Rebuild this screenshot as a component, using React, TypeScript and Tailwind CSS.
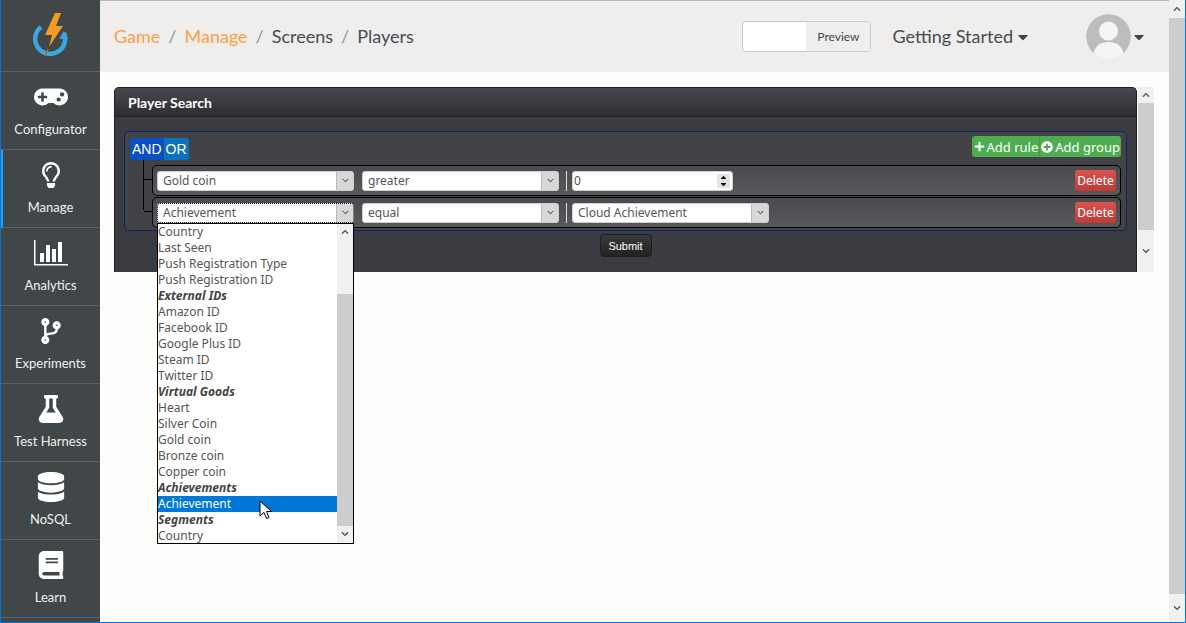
import React from 'react';
import { FaBook, FaChevronDown, FaChevronUp, FaCodeBranch, FaDatabase, FaFlask, FaGamepad, FaPlus, FaPlusCircle, FaRegLightbulb, FaCaretDown, FaSortDown, FaSortUp } from 'react-icons/fa';

const navItems = [
  { label: 'Configurator', icon: <FaGamepad className="w-[34px] h-[34px]" /> },
  { label: 'Manage', icon: <FaRegLightbulb className="w-[26px] h-[26px]" />, active: true },
  { label: 'Analytics', icon: <ChartIcon /> },
  { label: 'Experiments', icon: <FaCodeBranch className="w-[26px] h-[26px]" /> },
  { label: 'Test Harness', icon: <FaFlask className="w-[28px] h-[28px]" /> },
  { label: 'NoSQL', icon: <FaDatabase className="w-[28px] h-[30px]" /> },
  { label: 'Learn', icon: <FaBook className="w-[28px] h-[28px]" /> },
];

const dropdownOptions = [
  { label: 'Country' },
  { label: 'Last Seen' },
  { label: 'Push Registration Type' },
  { label: 'Push Registration ID' },
  { label: 'External IDs', group: true },
  { label: 'Amazon ID' },
  { label: 'Facebook ID' },
  { label: 'Google Plus ID' },
  { label: 'Steam ID' },
  { label: 'Twitter ID' },
  { label: 'Virtual Goods', group: true },
  { label: 'Heart' },
  { label: 'Silver Coin' },
  { label: 'Gold coin' },
  { label: 'Bronze coin' },
  { label: 'Copper coin' },
  { label: 'Achievements', group: true },
  { label: 'Achievement', selected: true },
  { label: 'Segments', group: true },
  { label: 'Country' },
];

function ChartIcon() {
  return (
    <svg width="34" height="26" viewBox="0 0 34 26" fill="currentColor">
      <path d="M0 0h1.5v24H34v1.5H0z" />
      <rect x="6" y="13" width="4" height="9" />
      <rect x="12" y="5" width="4" height="17" />
      <rect x="18" y="9" width="4" height="13" />
      <rect x="24" y="2" width="4" height="20" />
    </svg>
  );
}

function Logo() {
  return (
    <svg width="38" height="46" viewBox="0 0 38 46">
      <path d="M10 14 A15 15 0 1 0 33 20" fill="none" stroke="#3ba7df" strokeWidth="4.5" />
      <path d="M33 18 l4 8 h-9 z" fill="#3ba7df" />
      <path d="M14 22 L24 0 H30 L25 13 H32 L18 34 L21 22 Z" fill="#f59b23" />
      <path d="M17 36 L14 43" stroke="#a8743a" strokeWidth="1.5" />
    </svg>
  );
}

function Avatar() {
  return (
    <svg width="45" height="45" viewBox="0 0 45 45" className="rounded-full">
      <circle cx="22.5" cy="22.5" r="22.5" fill="#bdbdbd" />
      <circle cx="22.5" cy="17" r="9.5" fill="#f5f5f5" />
      <path d="M7 41 C9 31 15 28 22.5 28 C30 28 36 31 38 41 A22.5 22.5 0 0 1 7 41Z" fill="#f5f5f5" />
    </svg>
  );
}

function FakeSelect({ value, width, focused, children }: { value: string; width: string; focused?: boolean; children?: React.ReactNode }) {
  return (
    <div className={`relative h-[20px] ${width}`}>
      <div className={`flex h-full items-stretch rounded-[3px] bg-white border ${focused ? 'border-dotted border-black' : 'border-[#cfcfcf]'}`}>
        <span className="flex-1 pl-[5px] text-[12px] leading-[18px] text-[#555]">{value}</span>
        <span className="flex w-[17px] items-center justify-center bg-[#d8d8d8] border-l border-[#bbb] text-[#666]">
          <FaChevronDown className="w-[7px] h-[7px]" />
        </span>
      </div>
      {children}
    </div>
  );
}

function ScrollBar({ thumbTop, thumbBottom, thumbClass }: { thumbTop: string; thumbBottom: string; thumbClass: string }) {
  return (
    <div className={`flex flex-col items-center bg-[#f0f0f0] text-[#505050] ${thumbClass}`}>
      <div className={`flex w-full items-center justify-center ${thumbTop}`}>
        <FaChevronUp className="w-[8px] h-[8px]" />
      </div>
      <div className="flex-1 w-full bg-[#cdcdcd]" />
      <div className={`flex w-full items-center justify-center ${thumbBottom}`}>
        <FaChevronDown className="w-[8px] h-[8px]" />
      </div>
    </div>
  );
}

function Dropdown() {
  return (
    <div className="absolute left-0 top-[20px] z-10 flex w-[197px] h-[321px] border border-black bg-white overflow-hidden">
      <div className="flex-1">
        {dropdownOptions.map((opt, i) => (
          <div
            key={i}
            className={`h-[16px] text-[12px] leading-[15px] whitespace-nowrap ${
              opt.group ? 'font-bold italic text-[#444]' : opt.selected ? 'bg-[#0078d7] text-white' : 'text-[#555]'
            }`}
          >
            {opt.label}
          </div>
        ))}
      </div>
      <div className="flex w-[16px] flex-col bg-[#f0f0f0] text-[#505050]">
        <div className="flex h-[16px] items-center justify-center"><FaChevronUp className="w-[8px] h-[8px]" /></div>
        <div className="h-[54px]" />
        <div className="h-[232px] bg-[#cdcdcd]" />
        <div className="flex-1 flex items-center justify-center"><FaChevronDown className="w-[8px] h-[8px]" /></div>
      </div>
    </div>
  );
}

function RuleRow({ first, op, focused, children }: { first: string; op: string; focused?: boolean; children: React.ReactNode }) {
  return (
    <div className="relative flex h-[31px] items-center rounded-[5px] border border-black bg-gradient-to-b from-[#4b4a4f] to-[#58575c] pl-[4px] pr-[4px]">
      <span className="absolute left-[-9px] top-[13px] w-[8px] border-t border-black" />
      <FakeSelect value={first} width="w-[197px]" focused={focused}>
        {focused && <Dropdown />}
      </FakeSelect>
      <div className="ml-[8px]">
        <FakeSelect value={op} width="w-[197px]" />
      </div>
      <span className="ml-[7px] mr-[5px] h-[20px] w-[1px] bg-[#ddd]" />
      {children}
      <button className="ml-auto h-[21px] w-[41px] rounded-[3px] bg-gradient-to-b from-[#d9534f] to-[#c23a36] text-[12px] leading-[20px] text-white">
        Delete
      </button>
    </div>
  );
}

export default function App() {
  return (
    <div className="flex h-screen overflow-hidden border-x border-b border-[#0078d7] bg-[#fdfdfb]" style={{ fontFamily: 'Lato, sans-serif' }}>
      <aside className="flex w-[99px] shrink-0 flex-col bg-[#414649] text-white">
        <div className="flex h-[72px] items-center justify-center border-b border-[#5d6265] pr-[2px]">
          <Logo />
        </div>
        {navItems.map((item) => (
          <div
            key={item.label}
            className={`flex h-[78px] flex-col items-center border-b border-[#5d6265] pt-[8px] ${item.active ? 'border-l-[2px] border-l-[#2a9df4] pr-[2px]' : ''}`}
          >
            <div className="flex h-[34px] items-center justify-center">{item.icon}</div>
            <span className="mt-[5px] text-[13px] leading-[20px] text-[#f0f0f0]">{item.label}</span>
          </div>
        ))}
      </aside>

      <main className="flex min-w-0 flex-1 flex-col">
        <header className="flex h-[72px] items-center border-t border-[#b9b9b9] bg-[#efeeed] pl-[14px] pr-[22px] text-[18px] text-[#444b52]">
          <span className="text-[#ff9f43]">Game</span>
          <span className="mx-[8px] text-[#8a97a5]">/</span>
          <span className="text-[#ff9f43]">Manage</span>
          <span className="mx-[8px] text-[#8a97a5]">/</span>
          <span>Screens</span>
          <span className="mx-[8px] text-[#8a97a5]">/</span>
          <span>Players</span>

          <div className="ml-auto flex h-[31px] w-[129px] overflow-hidden rounded-[4px] border border-[#c9c9c9] bg-white">
            <div className="w-[63px]" />
            <div className="flex-1 bg-[#eeeeee] text-center text-[12px] leading-[29px] text-[#444]">Preview</div>
          </div>
          <span className="ml-[21px]">Getting Started</span>
          <FaCaretDown className="ml-[2px] w-[16px] h-[16px] text-[#444]" />
          <div className="ml-[55px]"><Avatar /></div>
          <FaCaretDown className="w-[16px] h-[16px] text-[#444]" />
        </header>

        <div className="flex items-start pl-[14px] pr-[15px] pt-[15px]">
          <section className="flex-1 rounded-t-[5px] border-t border-x border-[#202024] bg-[#3b3c41]">
            <h2 className="h-[29px] rounded-t-[5px] border-b border-[#222] bg-gradient-to-b from-[#49484f] to-[#2d2e32] pl-[13px] text-[14px] font-bold leading-[29px] text-white">
              Player Search
            </h2>
            <div className="h-[155px] px-[9px] pt-[14px]" style={{ fontFamily: '"Noto Sans", sans-serif' }}>
              <div className="h-[100px] rounded-[5px] border border-[#0c2461] bg-[#434247] pl-[5px] pr-[5px]">
                <div className="flex items-start justify-between pt-[4px]">
                  <div className="mt-[2px] flex h-[22px] overflow-hidden rounded-[3px] text-[14px] leading-[22px] text-white" style={{ fontFamily: '"Liberation Sans", sans-serif' }}>
                    <span className="bg-[#0b4fc4] px-[2px]">AND</span>
                    <span className="bg-[#0c72bd] px-[2px]">OR</span>
                  </div>
                  <div className="flex h-[21px] overflow-hidden rounded-[3px] bg-[#4cae4f] text-[13px] leading-[20px] text-white">
                    <span className="flex items-center gap-[2px] pl-[2px] pr-[1px] border-r border-[#419a44]"><FaPlus className="w-[11px] h-[11px]" />Add rule</span>
                    <span className="flex items-center gap-[2px] pl-[1px] pr-[1px]"><FaPlusCircle className="w-[12px] h-[12px]" />Add group</span>
                  </div>
                </div>
                <div className="relative ml-[22px] mt-[5px] flex flex-col gap-[1px]">
                  <span className="absolute left-[-9px] top-[-5px] h-[50px] w-[1px] bg-black" />
                  <RuleRow first="Gold coin" op="greater">
                    <div className="flex h-[20px] w-[161px] items-center justify-between rounded-[3px] border border-[#cfcfcf] bg-white pl-[1px] pr-[2px] text-[12px] text-[#555]">
                      0
                      <span className="flex h-[14px] w-[13px] flex-col items-center justify-center bg-[#e4e4e4] text-black">
                        <FaSortUp className="-mb-[6px] w-[9px] h-[9px]" />
                        <FaSortDown className="w-[9px] h-[9px]" />
                      </span>
                    </div>
                  </RuleRow>
                  <RuleRow first="Achievement" op="equal" focused>
                    <FakeSelect value="Cloud Achievement" width="w-[197px]" />
                  </RuleRow>
                </div>
              </div>
              <div className="mt-[3px] flex justify-center">
                <button className="h-[23px] w-[52px] rounded-[4px] border border-[#1e1e1e] bg-gradient-to-b from-[#3a3a3a] to-[#222] text-[11px] leading-[20px] text-white" style={{ fontFamily: '"Liberation Sans", sans-serif' }}>
                  Submit
                </button>
              </div>
            </div>
          </section>
          <ScrollBar thumbTop="h-[16px]" thumbBottom="h-[42px]" thumbClass="w-[16px] h-[185px] ml-[1px]" />
        </div>

        {/* mouse pointer sitting over the dropdown */}
        <svg className="absolute left-[259px] top-[500px] z-20" width="14" height="20" viewBox="0 0 14 20">
          <path d="M1 1v15l4-3.5 2.5 6 2.5-1-2.500-6H12.500z" fill="#fff" stroke="#000" strokeWidth="1" />
        </svg>
      </main>

      <ScrollBar thumbTop="h-[18px]" thumbBottom="h-[28px]" thumbClass="w-[16px] h-full" />
    </div>
  );
}
